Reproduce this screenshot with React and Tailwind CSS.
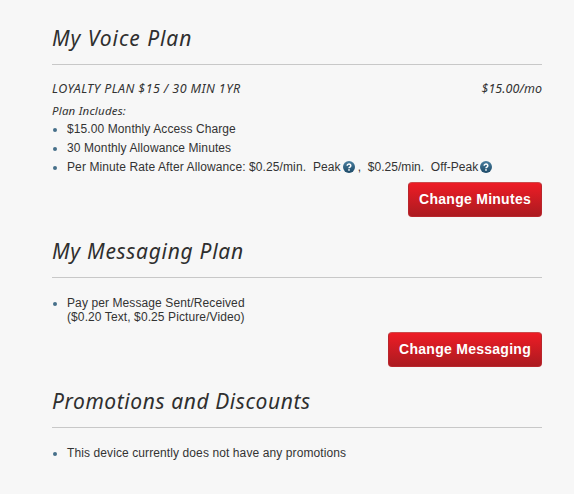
function HelpIcon() {
  return (
    <svg
      viewBox="0 0 12 12"
      className="mr-[3px] ml-[2px] h-3 w-3 shrink-0"
      role="img"
      aria-label="Help"
    >
      <defs>
        <linearGradient id="help-fill" x1="0" y1="0" x2="0" y2="1">
          <stop offset="0" stopColor="#4a7f9f" />
          <stop offset="1" stopColor="#1d4a68" />
        </linearGradient>
      </defs>
      <circle cx="6" cy="6" r="6" fill="url(#help-fill)" />
      <path
        d="M4.2 4.7a1.8 1.6 0 1 1 2.8 1.3c-.6.4-1 .6-1 1.3"
        fill="none"
        stroke="#fff"
        strokeWidth="1.5"
      />
      <rect x="5.2" y="8.2" width="1.6" height="1.5" fill="#fff" />
    </svg>
  );
}

function SectionHeading({ className, children }) {
  return (
    <h2 className="h-[39px] border-b border-[#c8c8c8] font-['Noto_Sans',sans-serif] text-[21px] leading-[24px] whitespace-nowrap text-[#2f2f2f] italic">
      <span className={className}>{children}</span>
    </h2>
  );
}

function Bullet({ children }) {
  return (
    <li className="flex items-start">
      <span className="mt-[6px] mr-[10px] ml-[1px] h-1 w-1 shrink-0 rounded-full bg-[#466f8a]" />
      <div className="flex items-center leading-[14px] tracking-[0.1px] whitespace-pre">
        {children}
      </div>
    </li>
  );
}

function RedButton({ children }) {
  return (
    <button className="h-[35px] rounded-[4px] border border-[#b8262c] border-t-[#cc4a4a] bg-linear-to-b from-[#ee1c25] to-[#ac1a20] pr-[10px] pb-[2px] pl-[10px] text-sm font-bold tracking-[0.27px] whitespace-nowrap text-white">
      {children}
    </button>
  );
}

function App() {
  return (
    <div className="h-[494px] bg-[#f7f7f7] pt-[26px] pr-8 pl-[52px] font-['Liberation_Sans',Arial,sans-serif] text-xs text-[#333]">
      {/* Voice */}
      <section className="h-[213px]">
        <SectionHeading className="tracking-[0.93px]">
          My Voice Plan
        </SectionHeading>
        <div className="mt-4 flex justify-between font-['Noto_Sans',sans-serif] text-[12.5px] leading-4 whitespace-nowrap italic">
          <span className="tracking-[0.4px]">LOYALTY PLAN $15 / 30 MIN 1YR</span>
          <span className="tracking-[0.05px]">$15.00/mo</span>
        </div>
        <p className="mt-[6px] font-['Noto_Sans',sans-serif] text-[11.5px] leading-4 tracking-[0.2px] italic">
          Plan Includes:
        </p>
        <ul className="mt-[3px] flex flex-col gap-[5px]">
          <Bullet>$15.00 Monthly Access Charge</Bullet>
          <Bullet>30 Monthly Allowance Minutes</Bullet>
          <Bullet>
            <span>{"Per Minute Rate After Allowance: $0.25/min.  Peak"}</span>
            <HelpIcon />
            <span className="tracking-[0.03px]">
              {",  $0.25/min.  Off-Peak"}
            </span>
            <HelpIcon />
          </Bullet>
        </ul>
        <div className="mt-2 flex justify-end">
          <RedButton>Change Minutes</RedButton>
        </div>
      </section>

      {/* Messaging */}
      <section className="h-[150px]">
        <SectionHeading className="tracking-[0.7px]">
          My Messaging Plan
        </SectionHeading>
        <ul className="mt-[18px]">
          <Bullet>
            {"Pay per Message Sent/Received\n($0.20 Text, $0.25 Picture/Video)"}
          </Bullet>
        </ul>
        <div className="mt-[8px] flex justify-end">
          <RedButton>Change Messaging</RedButton>
        </div>
      </section>

      {/* Promotions */}
      <section>
        <SectionHeading className="tracking-[0.58px]">
          Promotions and Discounts
        </SectionHeading>
        <ul className="mt-[18px]">
          <Bullet>This device currently does not have any promotions</Bullet>
        </ul>
      </section>
    </div>
  );
}

export default App;
